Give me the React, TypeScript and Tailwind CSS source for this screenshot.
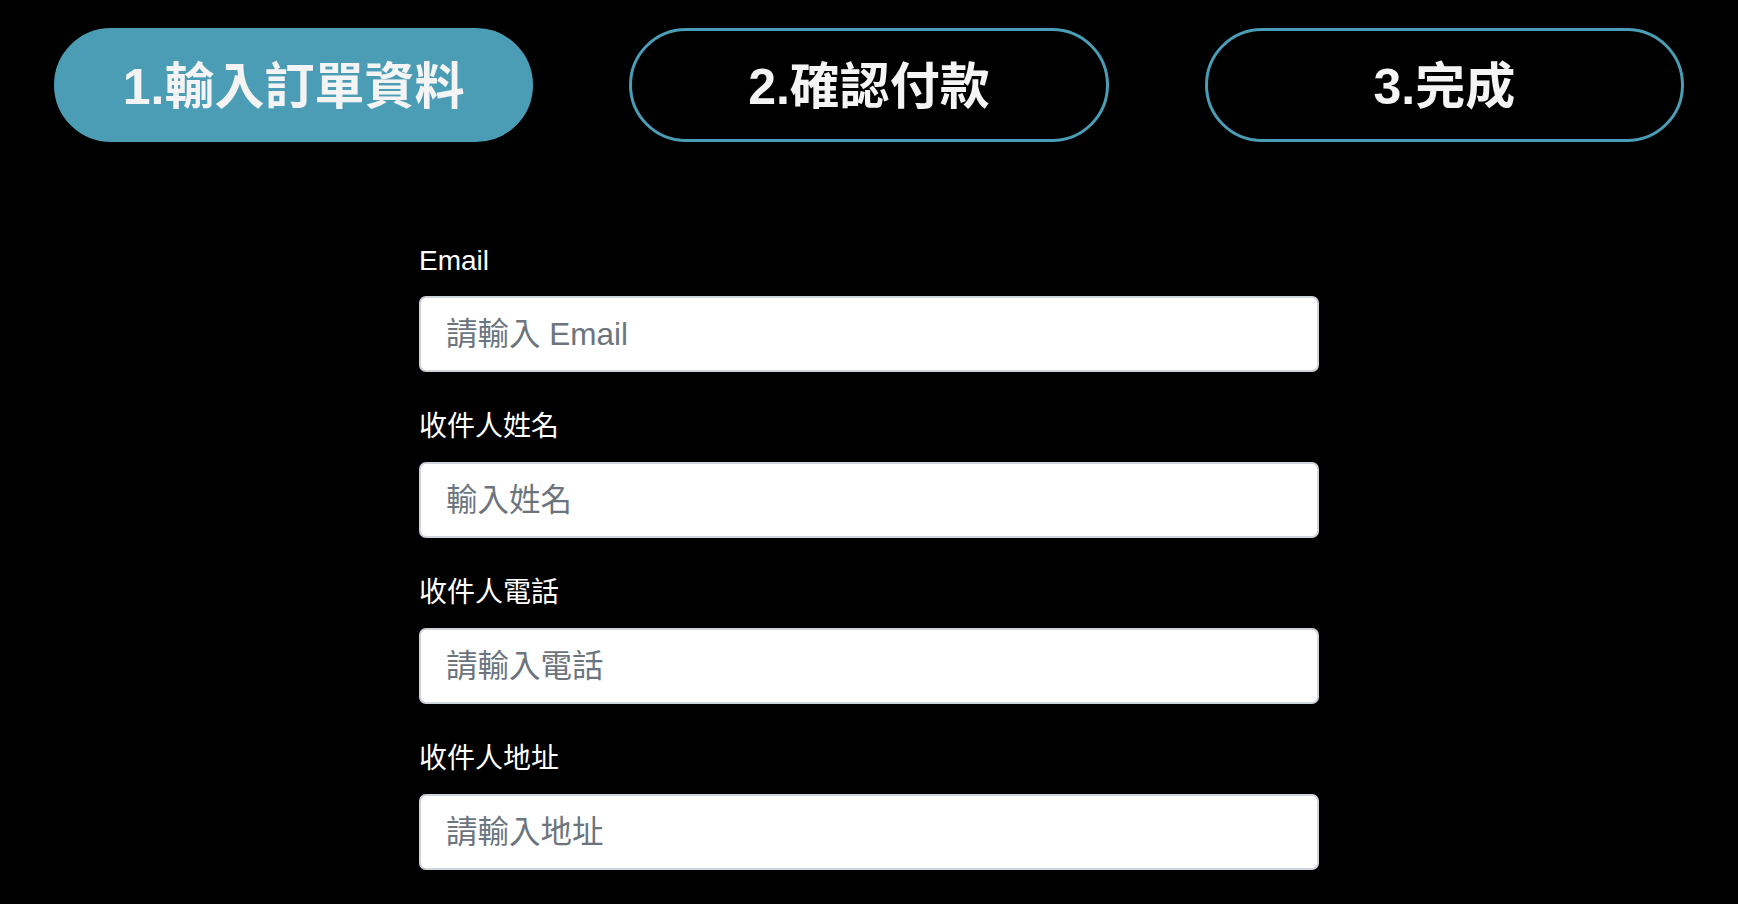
const steps = [
  { label: "1.輸入訂單資料", active: true },
  { label: "2.確認付款", active: false },
  { label: "3.完成", active: false },
];

const fields = [
  { label: "Email", placeholder: "請輸入 Email", type: "email" },
  { label: "收件人姓名", placeholder: "輸入姓名", type: "text" },
  { label: "收件人電話", placeholder: "請輸入電話", type: "tel" },
  { label: "收件人地址", placeholder: "請輸入地址", type: "text" },
];

const App = () => {
  return (
    <div
      className="min-h-screen bg-black px-[54px] pt-[28px] text-white"
      style={{ fontFamily: '"Liberation Sans", "Noto Sans CJK TC", sans-serif' }}
    >
      {/* Steps */}
      <div className="grid grid-cols-3 gap-[96px]">
        {steps.map((step) => (
          <div
            key={step.label}
            className={
              step.active
                ? "h-[114px] rounded-full border-[3px] border-[#4a9db5] bg-[#4a9db5] flex items-center justify-center"
                : "h-[114px] rounded-full border-[3px] border-[#4a9db5] bg-black flex items-center justify-center"
            }
          >
            <span className="pt-[3px] text-[50px] font-bold text-[#f4f4f4] leading-none">
              {step.label}
            </span>
          </div>
        ))}
      </div>

      {/* Form */}
      <form className="mx-auto mt-[98px] w-[900px] flex flex-col gap-[34px]">
        {fields.map((field) => (
          <div key={field.label} className="flex flex-col">
            <label className="text-[28px] leading-[42px] mb-[14px] text-white">
              {field.label}
            </label>
            <input
              type={field.type}
              placeholder={field.placeholder}
              className="h-[76px] w-full rounded-[7px] border-2 border-[#ced4da] bg-white px-[25px] text-[31.5px] text-[#495057] placeholder:text-[#6c757d] outline-none"
            />
          </div>
        ))}
      </form>
    </div>
  );
};

export default App;
